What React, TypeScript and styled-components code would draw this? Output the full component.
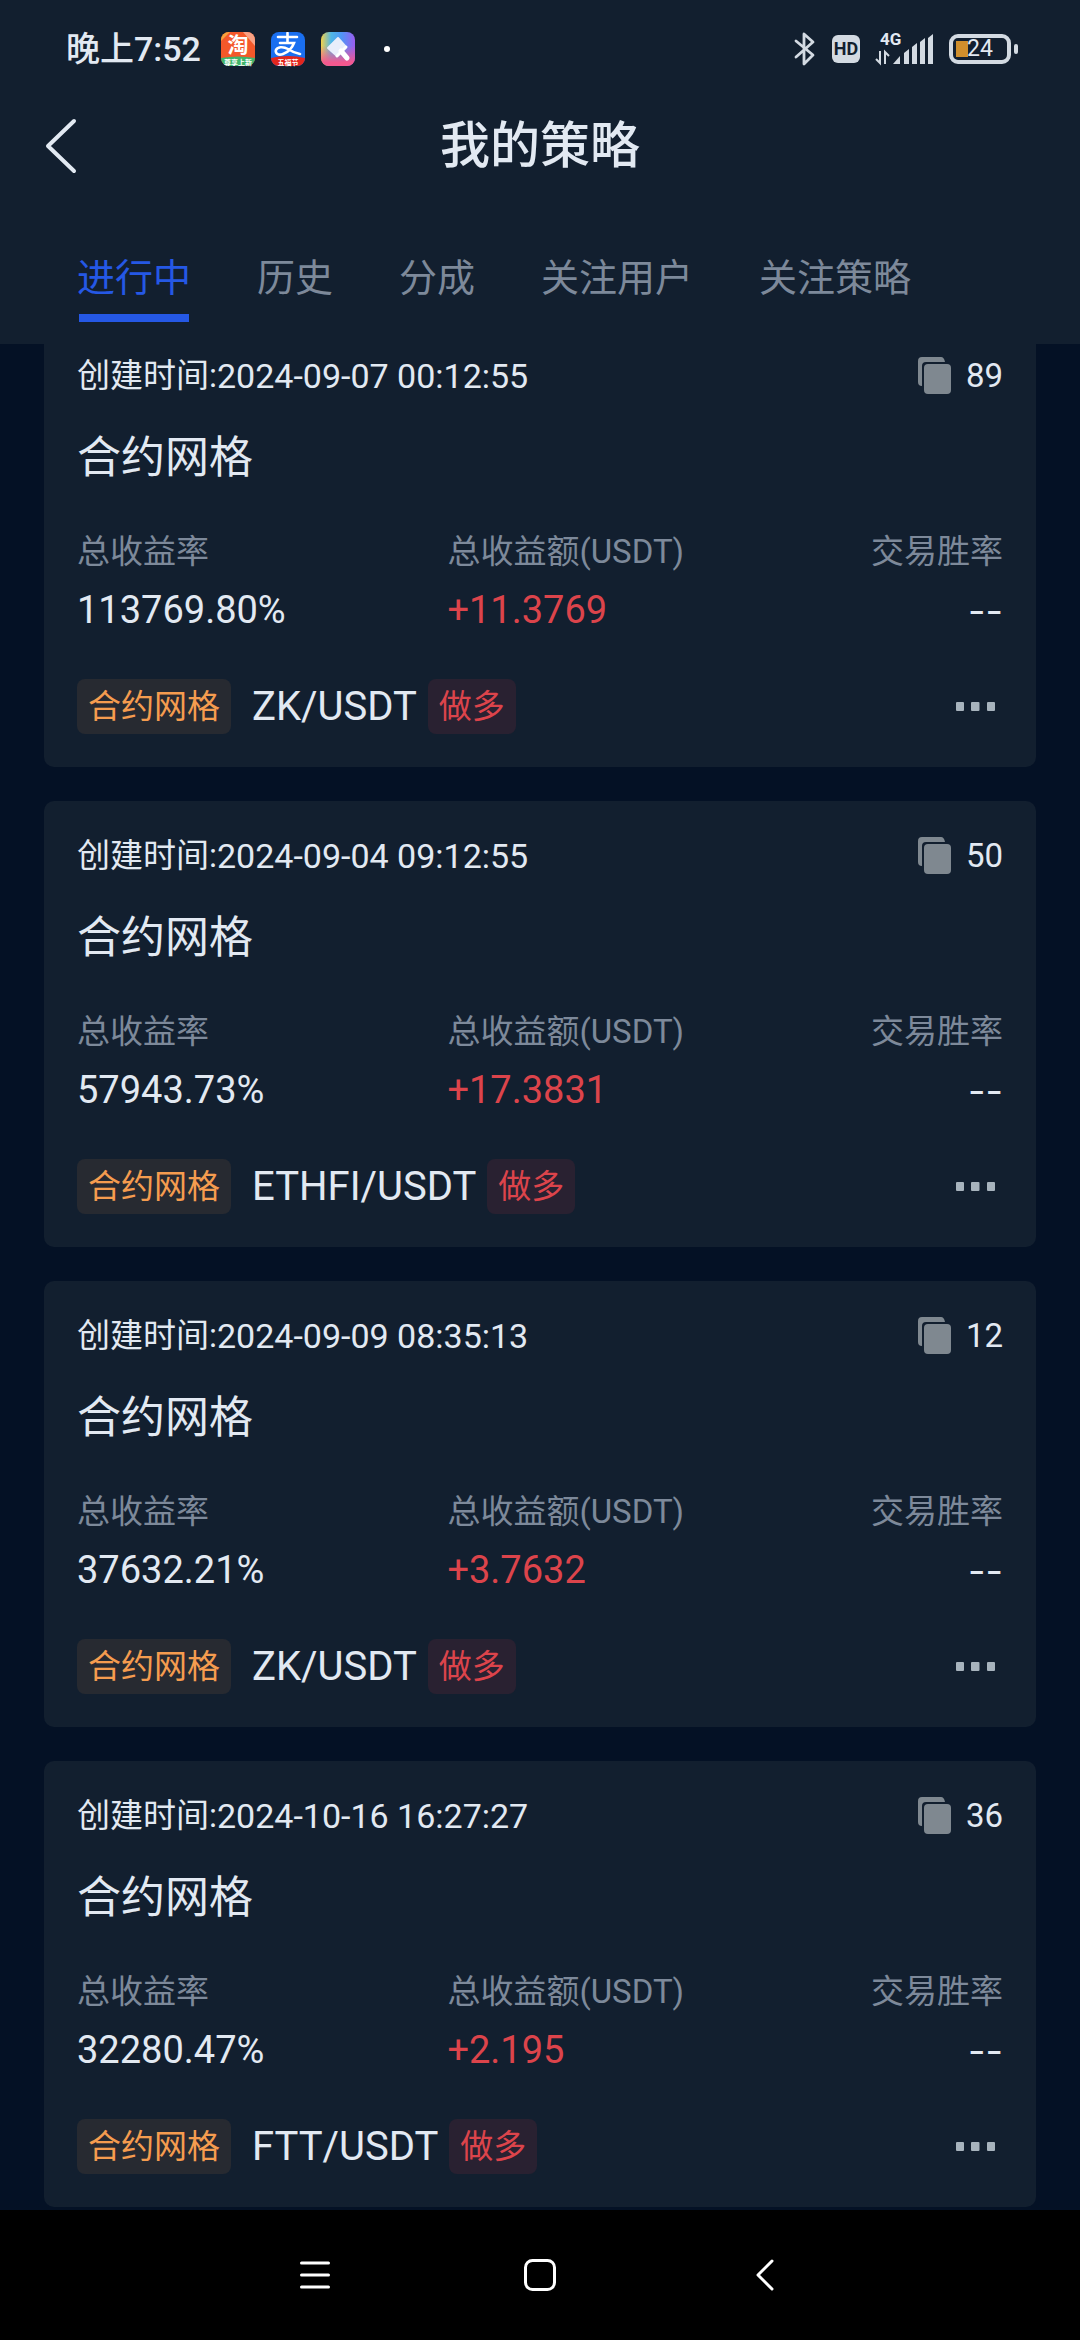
import React, { useState } from "react";
import styled, { createGlobalStyle } from "styled-components";

const c = {
  page: "#041125",
  panel: "#121f2f",
  text: "#e2e9f2",
  muted: "#7d899a",
  blue: "#2558e5",
  red: "#dc444b",
  orange: "#f59c4f",
  icon: "#7f8890",
  dots: "#a7b3bd",
  status: "#d3dae2",
};

const Global = createGlobalStyle`
  * { box-sizing: border-box; }
  body {
    margin: 0;
    background: ${c.page};
    color: ${c.text};
    font-family: Roboto, "Noto Sans CJK SC", sans-serif;
  }
  button { font: inherit; color: inherit; background: none; border: 0; padding: 0; margin: 0; cursor: pointer; }
  h1, h2, p, ul, dl, dd, dt { margin: 0; padding: 0; font-weight: 400; }
  ul { list-style: none; }
  svg { display: block; overflow: visible; }
`;

const Screen = styled.div`
  min-height: 100vh;
  display: flex;
  flex-direction: column;
`;

const Header = styled.header`
  position: relative;
  z-index: 1;
  background: ${c.panel};
  padding-bottom: 22px;
`;

const StatusBar = styled.div`
  display: flex;
  justify-content: space-between;
  align-items: center;
  height: 98px;
  padding: 0 62px 0 66px;
`;

const StatusGroup = styled.div<{ $gap: number }>`
  display: flex;
  align-items: center;
  gap: ${(p) => p.$gap}px;
`;

const Clock = styled.time`
  font-size: 34px;
  line-height: 40px;
  font-weight: 500;
  white-space: nowrap;
`;

const AppIcons = styled.div`
  display: flex;
  align-items: center;
  gap: 16px;
`;

const TitleBar = styled.div`
  display: grid;
  grid-template-columns: 64px 1fr 64px;
  align-items: center;
  height: 96px;
  padding: 0 30px;
`;

const BackButton = styled.button`
  display: flex;
  align-items: center;
  height: 64px;
  padding-left: 14px;
`;

const Title = styled.h1`
  && { font-weight: 500; }
  font-size: 50px;
  line-height: 64px;
  text-align: center;
`;

const Tabs = styled.div`
  display: flex;
  gap: 66px;
  padding: 56px 77px 0;
`;

const Tab = styled.button<{ $active: boolean }>`
  display: flex;
  flex-direction: column;
  align-items: center;
  font-size: 38px;
  line-height: 56px;
  height: 72px;
  white-space: nowrap;
  color: ${(p) => (p.$active ? c.blue : c.muted)};
  &::after {
    content: "";
    width: 110px;
    height: 8px;
    margin-top: 8px;
    background: ${c.blue};
    display: ${(p) => (p.$active ? "block" : "none")};
  }
`;

const List = styled.ul`
  display: flex;
  flex-direction: column;
  gap: 34px;
  && {
    margin-top: -23px;
    padding: 0 44px 3px;
  }
`;

const Card = styled.li`
  background: ${c.panel};
  border-radius: 10px;
  padding: 33px;
`;

const Row = styled.div`
  display: flex;
  align-items: center;
  justify-content: space-between;
`;

const Created = styled.p`
  display: flex;
  font-size: 33px;
  line-height: 44px;
  time { font-size: 34px; }
`;

const Copies = styled.div`
  display: flex;
  align-items: center;
  gap: 14px;
  font-size: 33px;
  line-height: 44px;
`;

const Name = styled.h2`
  font-size: 44px;
  line-height: 64px;
  && { margin-top: 28px; }
`;

const Stats = styled.dl`
  display: grid;
  grid-template-columns: 2fr 2fr 1fr;
  && { margin-top: 38px; }
`;

const Stat = styled.div<{ $end?: boolean }>`
  text-align: ${(p) => (p.$end ? "right" : "left")};
  white-space: nowrap;
`;

const Label = styled.dt`
  font-size: 33px;
  line-height: 48px;
  color: ${c.muted};
`;

const Value = styled.dd<{ $gain?: boolean; $empty?: boolean }>`
  font-size: 38px;
  line-height: 48px;
  && { margin-top: 10px; }
  color: ${(p) => (p.$gain ? c.red : c.text)};
  ${(p) => p.$empty && "font-family: Inter, sans-serif;"}
`;

const Footer = styled(Row)`
  margin-top: 45px;
`;

const PairGroup = styled.div`
  display: flex;
  align-items: center;
  gap: 11px;
`;

const Tag = styled.span<{ $tone: "orange" | "red" }>`
  font-size: 33px;
  line-height: 55px;
  height: 55px;
  padding: 0 11px;
  border-radius: 8px;
  color: ${(p) => c[p.$tone]};
  background: ${(p) => (p.$tone === "orange" ? "#272a31" : "#292131")};
`;

const Pair = styled.span`
  font-size: 40px;
  line-height: 55px;
  margin-left: 10px;
`;

const MoreButton = styled.button`
  display: flex;
  align-items: center;
  && { padding: 0 8px; }
  height: 55px;
`;

const NavBar = styled.nav`
  display: flex;
  justify-content: center;
  align-items: center;
  gap: 161px;
  height: 130px;
  margin-top: auto;
  background: #000;
`;

const NavButton = styled.button`
  display: flex;
  justify-content: center;
  align-items: center;
  width: 64px;
  height: 64px;
`;

const IconText = styled.text`
  font-family: "Noto Sans CJK SC", sans-serif;
  font-weight: 700;
  fill: #fff;
  text-anchor: middle;
`;

const TaobaoIcon = () => (
  <svg width="34" height="34" viewBox="0 0 34 34" aria-hidden="true">
    <clipPath id="tb"><rect width="34" height="34" rx="8" /></clipPath>
    <g clipPath="url(#tb)">
      <rect width="34" height="34" fill="#f4582a" />
      <path d="M22 0h12v14z" fill="#f9a184" />
      <path d="M0 0h9L0 9z" fill="#f8a23c" />
      <path d="M0 26q17-3 34 0v8H0z" fill="#3fb56c" />
    </g>
    <IconText x="17" y="20" fontSize="21">淘</IconText>
    <IconText x="17" y="33" fontSize="7">尊享上新</IconText>
  </svg>
);

const AlipayIcon = () => (
  <svg width="34" height="34" viewBox="0 0 34 34" aria-hidden="true">
    <clipPath id="zfb"><rect width="34" height="34" rx="8" /></clipPath>
    <g clipPath="url(#zfb)">
      <rect width="34" height="34" fill="#1a6ff0" />
      <path d="M0 26q17-4 34 0v8H0z" fill="#e2261d" />
      <g fill="none" stroke="#fff" strokeWidth="2.6" strokeLinecap="round">
        <path d="M7 5h19M16.500 1v9M9 11h14q-3 8-11 11c-5 2-8-1-7-4s7-4 12-1q6 4 12 5" />
      </g>
    </g>
    <IconText x="17" y="33" fontSize="7">五福节</IconText>
  </svg>
);

const ThemeIcon = () => (
  <svg width="34" height="34" viewBox="0 0 34 34" aria-hidden="true">
    <defs>
      <linearGradient id="th1" x1="0" y1="0" x2="1" y2="0">
        <stop offset="0" stopColor="#f3d24a" />
        <stop offset="0.3" stopColor="#4fb6e6" />
        <stop offset="0.6" stopColor="#4f96f5" />
        <stop offset="1" stopColor="#9a5cf0" />
      </linearGradient>
      <linearGradient id="th2" x1="0" y1="0" x2="0" y2="1">
        <stop offset="0.4" stopColor="#f4588f" stopOpacity="0" />
        <stop offset="0.9" stopColor="#f4588f" />
      </linearGradient>
    </defs>
    <rect width="34" height="34" rx="8" fill="url(#th1)" />
    <rect width="34" height="34" rx="8" fill="url(#th2)" />
    <path d="M17 6l8 9-9 9-9-8z" fill="#e9eefb" stroke="#e9eefb" strokeWidth="2" strokeLinejoin="round" />
    <path d="M25 15l-9 9" stroke="#fff" strokeWidth="3" strokeLinecap="round" />
    <path d="M20 19l6 7" stroke="#fff" strokeWidth="5" strokeLinecap="round" />
  </svg>
);

const BluetoothIcon = () => (
  <svg width="22" height="34" viewBox="0 0 22 34" aria-hidden="true">
    <path d="M2 9l17 14-9 9V2l9 8L2 25" fill="none" stroke={c.status} strokeWidth="2.800" strokeLinejoin="round" strokeLinecap="round" />
  </svg>
);

const HdBadge = styled.span`
  display: grid;
  place-items: center;
  width: 28px;
  height: 28px;
  border-radius: 6px;
  background: ${c.status};
  color: ${c.panel};
  font-size: 18px;
  line-height: 28px;
  font-weight: 700;
`;

const Signal = styled.div`
  display: grid;
  grid-template-columns: 17px 40px;
  align-items: end;
  height: 34px;
`;

const NetworkType = styled.div`
  display: flex;
  flex-direction: column;
  gap: 4px;
  height: 34px;
  font-size: 17px;
  line-height: 15px;
  font-weight: 700;
  span { margin-left: 4px; }
`;

const SignalBars = () => (
  <svg width="40" height="32" viewBox="0 0 40 32" fill={c.status} aria-hidden="true">
    <path d="M0 30l7-8v8zM11 19l5-4v15h-5zM19 13l5-4v21h-5zM27 8l5-4v26h-5zM35 4l5-4v30h-5z" />
  </svg>
);

const Battery = styled.div`
  display: flex;
  align-items: center;
  gap: 3px;
  &::after {
    content: "";
    width: 4px;
    height: 10px;
    border-radius: 2px;
    background: ${c.status};
  }
`;

const BatteryBody = styled.span`
  display: grid;
  place-items: center;
  width: 62px;
  height: 30px;
  border: 4px solid ${c.status};
  border-radius: 9px;
  background: linear-gradient(#d08f2c, #d08f2c) 3px 3px / 12px 16px no-repeat;
  font-size: 23px;
  line-height: 22px;
`;

const CopyIcon = () => (
  <svg width="34" height="38" viewBox="0 0 34 38" fill={c.icon} aria-hidden="true">
    <path d="M4 0h19q3 0 4 5H8q-4 0-4 4v20q-4 0-4-4V4q0-4 4-4z" />
    <rect x="6" y="7" width="27" height="30" rx="4" />
  </svg>
);

const DotsIcon = () => (
  <svg width="39" height="9" viewBox="0 0 39 9" fill={c.dots} aria-hidden="true">
    <rect width="8" height="9" rx="1" />
    <rect x="15" width="8.500" height="9" rx="1" />
    <rect x="31" width="8" height="9" rx="1" />
  </svg>
);

const tabs = ["进行中", "历史", "分成", "关注用户", "关注策略"];

const strategies = [
  { created: "2024-09-07 00:12:55", copies: 89, rate: "113769.80%", profit: "+11.3769", pair: "ZK/USDT" },
  { created: "2024-09-04 09:12:55", copies: 50, rate: "57943.73%", profit: "+17.3831", pair: "ETHFI/USDT" },
  { created: "2024-09-09 08:35:13", copies: 12, rate: "37632.21%", profit: "+3.7632", pair: "ZK/USDT" },
  { created: "2024-10-16 16:27:27", copies: 36, rate: "32280.47%", profit: "+2.195", pair: "FTT/USDT" },
];

const StrategyCard = ({ item }: { item: (typeof strategies)[number] }) => (
  <Card>
    <Row>
      <Created>创建时间:<time>{item.created}</time></Created>
      <Copies><CopyIcon />{item.copies}</Copies>
    </Row>
    <Name>合约网格</Name>
    <Stats>
      <Stat><Label>总收益率</Label><Value>{item.rate}</Value></Stat>
      <Stat><Label>总收益额(USDT)</Label><Value $gain>{item.profit}</Value></Stat>
      <Stat $end><Label>交易胜率</Label><Value $empty>--</Value></Stat>
    </Stats>
    <Footer>
      <PairGroup>
        <Tag $tone="orange">合约网格</Tag>
        <Pair>{item.pair}</Pair>
        <Tag $tone="red">做多</Tag>
      </PairGroup>
      <MoreButton aria-label="更多"><DotsIcon /></MoreButton>
    </Footer>
  </Card>
);

export default function App() {
  const [active, setActive] = useState(0);
  return (
    <Screen>
      <Global />
      <Header>
        <StatusBar>
          <StatusGroup $gap={20}>
            <Clock>晚上7:52</Clock>
            <AppIcons><TaobaoIcon /><AlipayIcon /><ThemeIcon /></AppIcons>
            <svg width="24" height="6" viewBox="0 0 24 6" aria-hidden="true"><circle cx="12" cy="3" r="3" fill="#fff" /></svg>
          </StatusGroup>
          <StatusGroup $gap={16}>
            <BluetoothIcon />
            <HdBadge>HD</HdBadge>
            <Signal>
              <NetworkType>
                <span>4G</span>
                <svg width="13" height="13" viewBox="0 0 13 13" fill="none" stroke={c.status} strokeWidth="2" aria-hidden="true">
                  <path d="M4 0v12L0 8M9 13V1l4 4" />
                </svg>
              </NetworkType>
              <SignalBars />
            </Signal>
            <Battery><BatteryBody>24</BatteryBody></Battery>
          </StatusGroup>
        </StatusBar>
        <TitleBar>
          <BackButton aria-label="返回">
            <svg width="34" height="56" viewBox="0 0 34 56" fill="none" stroke={c.text} strokeWidth="4" strokeLinecap="round" strokeLinejoin="round" aria-hidden="true">
              <path d="M30 3L4 28l26 25" />
            </svg>
          </BackButton>
          <Title>我的策略</Title>
        </TitleBar>
        <Tabs role="tablist">
          {tabs.map((t, i) => (
            <Tab key={t} role="tab" aria-selected={i === active} $active={i === active} onClick={() => setActive(i)}>{t}</Tab>
          ))}
        </Tabs>
      </Header>
      <List>
        {strategies.map((s) => <StrategyCard key={s.created} item={s} />)}
      </List>
      <NavBar>
        <NavButton aria-label="菜单">
          <svg width="30" height="28" viewBox="0 0 30 28" stroke="#fff" strokeWidth="3" strokeLinecap="round" aria-hidden="true">
            <path d="M1.500 2h27M1.500 14h27M1.500 26h27" />
          </svg>
        </NavButton>
        <NavButton aria-label="主页">
          <svg width="32" height="32" viewBox="0 0 32 32" aria-hidden="true">
            <rect x="1.500" y="1.500" width="29" height="29" rx="7" fill="none" stroke="#fff" strokeWidth="3" />
          </svg>
        </NavButton>
        <NavButton aria-label="后退">
          <svg width="18" height="32" viewBox="0 0 18 32" fill="none" stroke="#fff" strokeWidth="3" strokeLinecap="round" strokeLinejoin="round" aria-hidden="true">
            <path d="M16 2L2 16l14 14" />
          </svg>
        </NavButton>
      </NavBar>
    </Screen>
  );
}
